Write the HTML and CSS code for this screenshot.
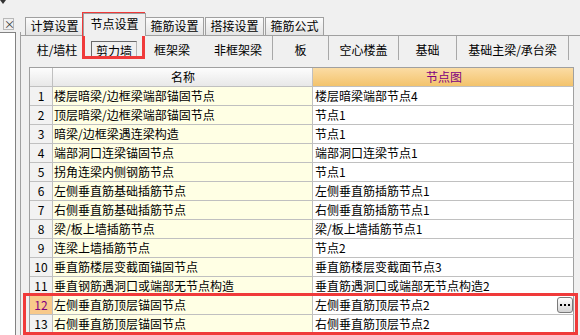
FILE: index.html
```html
<!DOCTYPE html>
<html>
<head>
<meta charset="utf-8" />
<title>节点设置</title>
<link rel="stylesheet" href="styles.css">
</head>
<body>
<div class="app">
    <div class="side">
        <div class="side-top"><span class="drop"></span></div>
        <div class="side-close"><span class="close-btn">×</span></div>
        <div class="side-box"></div>
    </div>
    <div class="split"></div>
    <div class="main">
        <div class="tabs">
            <div class="tab">计算设置</div>
            <div class="tab tab-on">节点设置</div>
            <div class="tab">箍筋设置</div>
            <div class="tab">搭接设置</div>
            <div class="tab">箍筋公式</div>
        </div>
        <div class="panel">
            <div class="bar">
                <div class="bar-item">柱/墙柱</div>
                <div class="bar-item"><span class="pressed">剪力墙</span></div>
                <div class="bar-item">框架梁</div>
                <div class="bar-item">非框架梁</div>
                <div class="sep"></div>
                <div class="bar-item">板</div>
                <div class="sep"></div>
                <div class="bar-item">空心楼盖</div>
                <div class="sep"></div>
                <div class="bar-item">基础</div>
                <div class="sep"></div>
                <div class="bar-item">基础主梁/承台梁</div>
                <div class="sep"></div>
            </div>
            <div class="grid">
                <div class="row head">
                    <div class="num"></div>
                    <div class="name">名称</div>
                    <div class="val">节点图</div>
                </div>
                <div class="row"><div class="num">1</div><div class="name">楼层暗梁/边框梁端部锚固节点</div><div class="val">楼层暗梁端部节点4</div></div>
                <div class="row"><div class="num">2</div><div class="name">顶层暗梁/边框梁端部锚固节点</div><div class="val">节点1</div></div>
                <div class="row"><div class="num">3</div><div class="name">暗梁/边框梁遇连梁构造</div><div class="val">节点1</div></div>
                <div class="row"><div class="num">4</div><div class="name">端部洞口连梁锚固节点</div><div class="val">端部洞口连梁节点1</div></div>
                <div class="row"><div class="num">5</div><div class="name">拐角连梁内侧钢筋节点</div><div class="val">节点1</div></div>
                <div class="row"><div class="num">6</div><div class="name">左侧垂直筋基础插筋节点</div><div class="val">左侧垂直筋插筋节点1</div></div>
                <div class="row"><div class="num">7</div><div class="name">右侧垂直筋基础插筋节点</div><div class="val">右侧垂直筋插筋节点1</div></div>
                <div class="row"><div class="num">8</div><div class="name">梁/板上墙插筋节点</div><div class="val">梁/板上墙插筋节点1</div></div>
                <div class="row"><div class="num">9</div><div class="name">连梁上墙插筋节点</div><div class="val">节点2</div></div>
                <div class="row"><div class="num">10</div><div class="name">垂直筋楼层变截面锚固节点</div><div class="val">垂直筋楼层变截面节点3</div></div>
                <div class="row"><div class="num">11</div><div class="name">垂直钢筋遇洞口或端部无节点构造</div><div class="val">垂直筋遇洞口或端部无节点构造2</div></div>
                <div class="row row-on"><div class="num">12</div><div class="name">左侧垂直筋顶层锚固节点</div><div class="val">左侧垂直筋顶层节点2<span class="more"><i></i><i></i><i></i></span></div></div>
                <div class="row"><div class="num">13</div><div class="name">右侧垂直筋顶层锚固节点</div><div class="val">右侧垂直筋顶层节点2</div></div>
            </div>
        </div>
    </div>
    <div class="mark mark-tab"></div>
    <div class="mark mark-rows"></div>
</div>
</body>
</html>
```

FILE: styles.css
```css
*{
	margin:0;
	padding:0;
	box-sizing:border-box;}
body{
	background:#f0f0f0;
	font-family:"Noto Sans CJK SC", "Liberation Sans", sans-serif;
	font-size:12px;
	color:#000;}
.app{
	width:580px;
	height:335px;
	display:flex;
	position:relative;
	overflow:hidden;}

/* 左边的窄窗 */
.side{
	width:16px;
	display:flex;
	flex-direction:column;}
.side-top{
	height:18px;}
.drop{
	display:block;
	width:0;
	height:0;
	border-left:3px solid transparent;
	border-right:3px solid transparent;
	border-top:4px solid #333;}
.side-close{
	height:14px;
	padding-left:3px;}
.close-btn{
	display:block;
	width:11px;
	height:12px;
	border:1px solid #b8b8b8;
	font-size:11px;
	line-height:10px;
	text-align:center;
	color:#333;}
.side-box{
	flex:1;
	background:#fff;
	border-top:1px solid #828282;
	border-right:1px solid #828282;}
.split{
	width:5px;
	margin-top:32px;
	border-right:1px solid #a0a0a0;}

/* 右边主体 */
.main{
	flex:1;
	display:flex;
	flex-direction:column;}
.tabs{
	height:35px;
	display:flex;
	align-items:flex-end;
	padding-left:4px;}
.tab{
	width:59px;
	height:18px;
	margin-right:1px;
	border:1px solid #a0a0a0;
	border-bottom:none;
	background:linear-gradient(#fcfcfc,#e4e4e4);
	line-height:16px;
	text-align:center;}
.tab-on{
	width:63px;
	height:23px;
	margin:0 -1px -1px -2px;
	background:#f0f0f0;
	line-height:20px;
	position:relative;
	z-index:1;}
.panel{
	flex:1;
	border-top:1px solid #a0a0a0;}

.bar{
	height:26px;
	margin-left:5px;
	display:grid;
	grid-template-columns:62px 52px 64px 68px 1px 55px 1px 69px 1px 57px 1px 111px 1px;
	align-items:center;}
.bar-item{
	text-align:center;
	line-height:18px;
	padding-top:2px;}
.pressed{
	display:block;
	width:46px;
	height:18px;
	margin:0 auto;
	border:1px solid;
	border-color:#6a6a6a #b4b4b4 #b4b4b4 #6a6a6a;
	line-height:18px;}
.sep{
	align-self:start;
	height:24px;
	background:#a8a8a8;}

/* 表格 */
.grid{
	width:545px;
	margin:5px 0 0 8px;
	border-left:1px solid #a0a0a0;
	border-top:1px solid #a0a0a0;}
.row{
	display:grid;
	grid-template-columns:23px 260px 261px;
	height:19px;}
.row div{
	border-right:1px solid #c0c0c0;
	border-bottom:1px solid #c0c0c0;
	line-height:18px;
	white-space:nowrap;
	overflow:hidden;}
.num{
	background:#f2f2f2;
	text-align:center;}
.name{
	background:#ffffe4;
	padding-left:1px;}
.val{
	background:#fff;
	padding-left:2px;
	display:flex;
	justify-content:space-between;
	align-items:center;}
.row .val{
	border-right-color:#a0a0a0;}
.head .num,
.head .name{
	background:linear-gradient(#fdfdfd,#e8e8e8);
	text-align:center;}
.head .val{
	background:linear-gradient(#fbdca4,#f3c36c);
	color:#800080;
	justify-content:center;}
.row-on .num{
	background:#f8c98a;
	color:#800080;}
.more{
	width:16px;
	height:16px;
	margin-right:0;
	border:1px solid #7a7a7a;
	border-radius:3px;
	background:linear-gradient(#ffffff,#d4d4d4);
	display:flex;
	justify-content:center;
	align-items:center;
	gap:2px;}
.more i{
	width:2px;
	height:2px;
	background:#000;}

/* 红框标注 */
.mark{
	position:absolute;
	border:3px solid #f03a3a;}
.mark-tab{
	left:82px;
	top:12px;
	width:63px;
	height:47px;}
.mark-rows{
	left:23px;
	top:293px;
	width:555px;
	height:42px;}
```
